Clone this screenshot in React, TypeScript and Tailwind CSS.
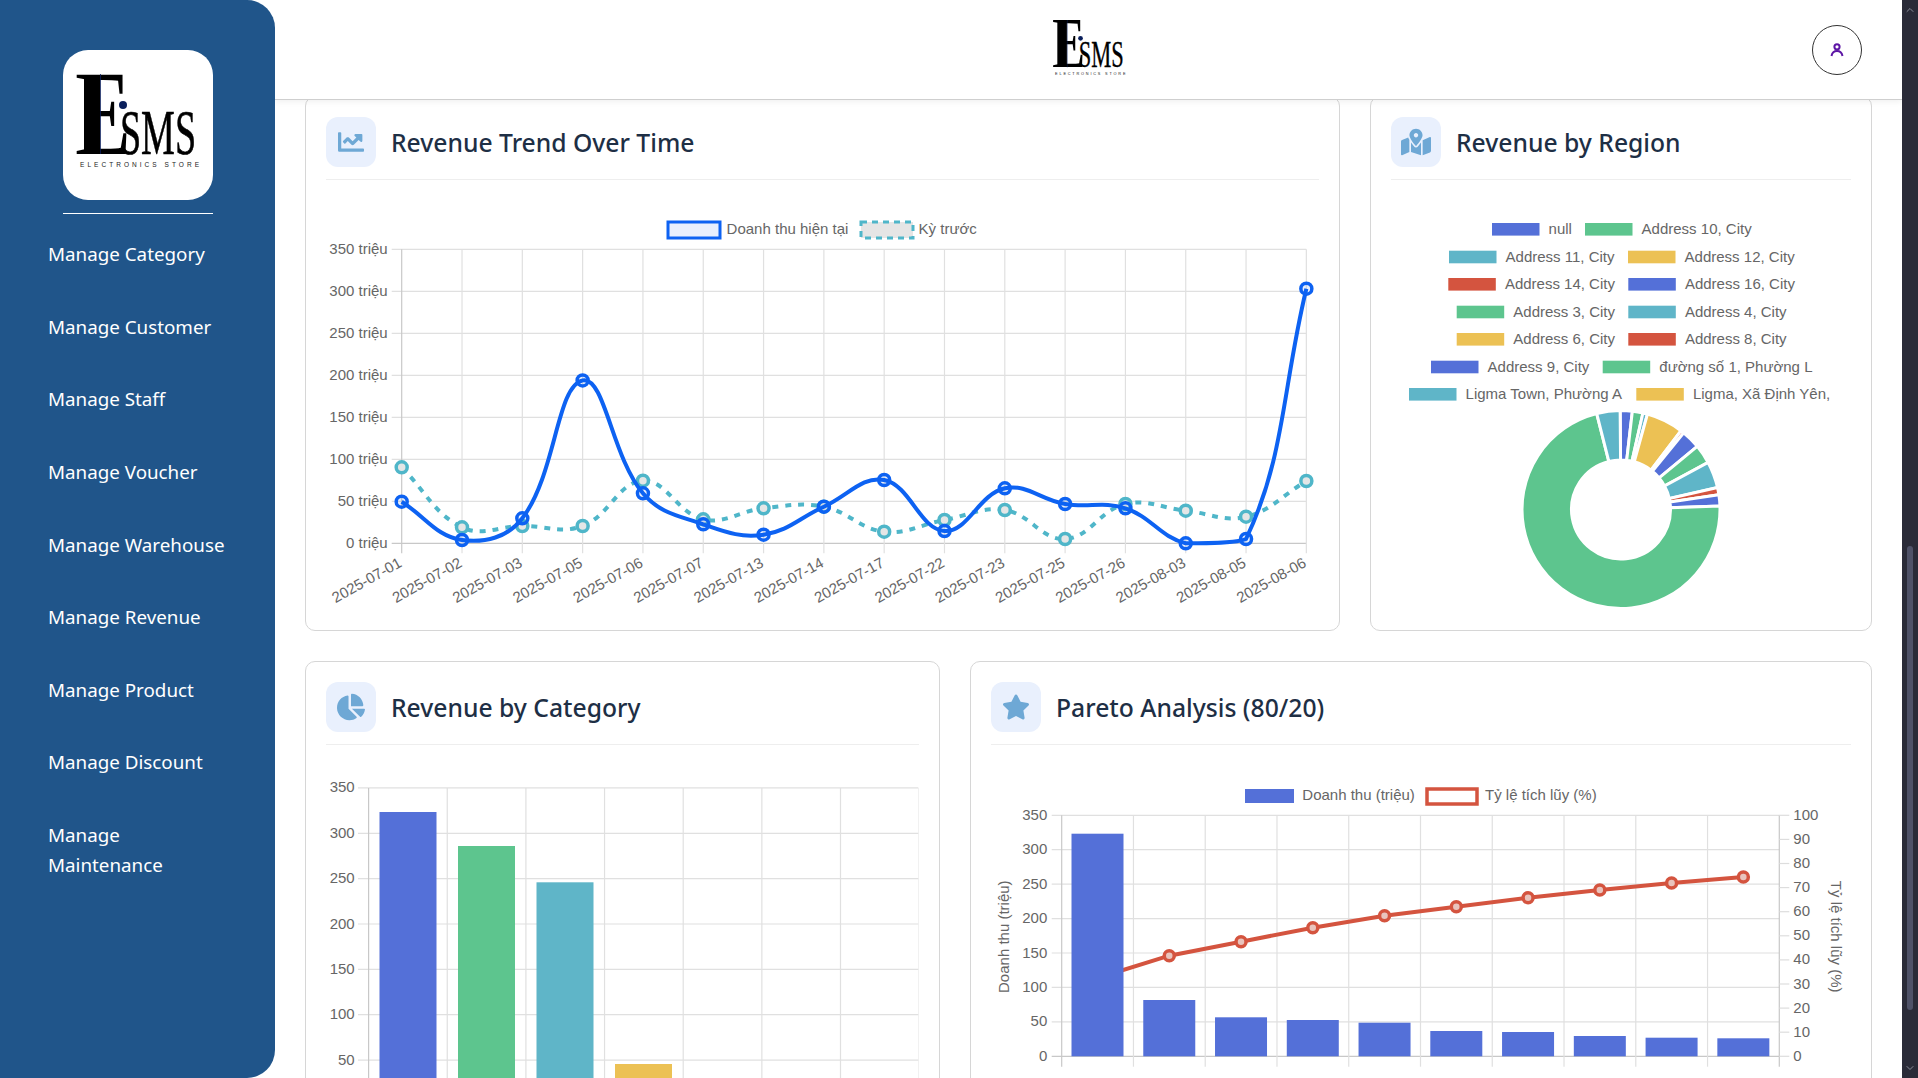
import { ChevronDown, ChevronUp } from 'lucide-react';
import { FaChartLine, FaChartPie, FaMapMarkedAlt, FaStar } from 'react-icons/fa';
import type { ReactNode } from 'react';

const BLUE = '#5470d8';
const GREEN = '#5dc58e';
const TEAL = '#5fb5c8';
const YELLOW = '#ecc154';
const RED = '#d4543f';

const navItems = [
  'Manage Category',
  'Manage Customer',
  'Manage Staff',
  'Manage Voucher',
  'Manage Warehouse',
  'Manage Revenue',
  'Manage Product',
  'Manage Discount',
  'Manage Maintenance',
];

const trendDates = [
  '2025-07-01', '2025-07-02', '2025-07-03', '2025-07-05', '2025-07-06', '2025-07-07', '2025-07-13', '2025-07-14',
  '2025-07-17', '2025-07-22', '2025-07-23', '2025-07-25', '2025-07-26', '2025-08-03', '2025-08-05', '2025-08-06',
];
const currentY = [501.7, 540, 518.3, 380.4, 493.3, 524.3, 534.7, 506.7, 480, 531, 488.3, 504, 508.3, 543.3, 539, 288.7];
const previousY = [467.3, 527.3, 526, 526, 480.7, 519.3, 508.3, 506.7, 531.7, 520, 510, 539, 504, 510.7, 516.7, 481];

// Same curve Chart.js draws with tension 0.4, control points capped to the chart area
function spline(points: [number, number][], bottom: number, t = 0.4) {
  let d = `M${points[0][0]} ${points[0][1]}`;
  const ctrl = points.map((p, i) => {
    const prev = points[Math.max(i - 1, 0)];
    const next = points[Math.min(i + 1, points.length - 1)];
    const d01 = Math.hypot(p[0] - prev[0], p[1] - prev[1]);
    const d12 = Math.hypot(next[0] - p[0], next[1] - p[1]);
    const total = d01 + d12 || 1;
    return {
      bx: p[0] - (t * d01 * (next[0] - prev[0])) / total,
      by: Math.min(p[1] - (t * d01 * (next[1] - prev[1])) / total, bottom),
      ax: p[0] + (t * d12 * (next[0] - prev[0])) / total,
      ay: Math.min(p[1] + (t * d12 * (next[1] - prev[1])) / total, bottom),
    };
  });
  for (let i = 1; i < points.length; i++) {
    d += ` C${ctrl[i - 1].ax} ${ctrl[i - 1].ay} ${ctrl[i].bx} ${ctrl[i].by} ${points[i][0]} ${points[i][1]}`;
  }
  return d;
}

function Logo({ className }: { className: string }) {
  return (
    <svg viewBox="11 24 125 93" className={`overflow-visible ${className}`}>
      <text x="11" y="104" textLength="57" lengthAdjust="spacingAndGlyphs" className="fill-black font-['Liberation_Serif',serif] text-[121px]">
        E
      </text>
      <rect x="21" y="26" width="16" height="76" fill="#000000" />
      <rect x="37" y="24" width="0.8" height="80" fill="#0a1f5c" />
      <circle cx="60" cy="55" r="4" fill="#0a1f5c" />
      <text x="57" y="104" textLength="76" lengthAdjust="spacingAndGlyphs" stroke="#000000" strokeWidth="0.6" className="fill-black font-['Liberation_Serif',serif] text-[64px]">
        SMS
      </text>
      <text x="17" y="116.500" textLength="119" className="fill-[#222] font-['Liberation_Sans',sans-serif] text-[6.500px]">
        ELECTRONICS STORE
      </text>
    </svg>
  );
}

function Card({ icon, title, children }: { icon: ReactNode; title: string; children: ReactNode }) {
  return (
    <div className="rounded-[10px] border border-[#d6d6d6] bg-white px-5 pb-5 pt-5">
      <div className="flex items-center gap-[15px] border-b border-[#eeeeee] pb-3">
        <div className="flex h-[50px] w-[50px] items-center justify-center rounded-xl bg-[#e9f0fd] text-[#6ea8d5]">{icon}</div>
        <h2 className="pt-[2px] font-['Noto_Sans',sans-serif] text-[24.700px] font-medium text-[#1e2f45]">{title}</h2>
      </div>
      {children}
    </div>
  );
}

function Label({ x, y, children, anchor = 'start' }: { x: number; y: number; children: ReactNode; anchor?: 'start' | 'end' }) {
  return (
    <text x={x} y={y - 1} textAnchor={anchor} dominantBaseline="central" className="fill-[#666666] text-[15px]">
      {children}
    </text>
  );
}

function TrendChart() {
  const xs = trendDates.map((_, i) => 401.7 + i * 60.31);
  const ys = [0, 1, 2, 3, 4, 5, 6, 7].map((i) => 543.3 - i * 42);
  const current = xs.map((x, i) => [x, currentY[i]] as [number, number]);
  const previous = xs.map((x, i) => [x, previousY[i]] as [number, number]);
  return (
    <svg viewBox="326 180 993 430" className="block h-[430px] w-[993px] font-['Liberation_Sans',sans-serif]">
      {ys.map((y, i) => (
        <g key={y}>
          <line x1="391.7" x2="1306.3" y1={y} y2={y} stroke={i === 0 ? '#c8c8c8' : '#e0e0e0'} strokeWidth="1.2" />
          <Label x={387.7} y={y} anchor="end">{`${i * 50} triệu`}</Label>
        </g>
      ))}
      {xs.map((x, i) => (
        <g key={trendDates[i]}>
          <line x1={x} x2={x} y1="249.3" y2="553.3" stroke={i === 0 ? '#c8c8c8' : '#e0e0e0'} strokeWidth="1.2" />
          <text
            textAnchor="end"
            transform={`translate(${x + 1} 566) rotate(-29)`}
            className="fill-[#666666] text-[15px]"
          >
            {trendDates[i]}
          </text>
        </g>
      ))}
      <rect x="668" y="222" width="52" height="16" fill="#e8effd" stroke="#0d62f2" strokeWidth="3" />
      <Label x={726.6} y={229}>Doanh thu hiện tại</Label>
      <rect x="861" y="222" width="52" height="16" fill="#e5e5e5" stroke="#4fb6c9" strokeWidth="3" strokeDasharray="6 5" />
      <Label x={918.6} y={229}>Kỳ trước</Label>

      <path d={spline(previous, 543.3)} fill="none" stroke="#4fb6c9" strokeWidth="4" strokeDasharray="6 7" />
      {previous.map(([x, y]) => (
        <circle key={x} cx={x} cy={y} r="5.5" fill="#e4e6e6" stroke="#4fb6c9" strokeWidth="3.5" />
      ))}
      <path d={spline(current, 543.3)} fill="none" stroke="#0d62f2" strokeWidth="4" />
      {current.map(([x, y]) => (
        <circle key={x} cx={x} cy={y} r="5.5" fill="#0d62f21a" stroke="#0d62f2" strokeWidth="3.5" />
      ))}
    </svg>
  );
}

const regionLegend: [number, number, string, string][] = [
  [229.3, 1492, 'null', BLUE],
  [229.3, 1585, 'Address 10, City', GREEN],
  [257, 1449, 'Address 11, City', TEAL],
  [257, 1628, 'Address 12, City', YELLOW],
  [284.3, 1448.3, 'Address 14, City', RED],
  [284.3, 1628.3, 'Address 16, City', BLUE],
  [312, 1456.7, 'Address 3, City', GREEN],
  [312, 1628.3, 'Address 4, City', TEAL],
  [339.3, 1456.7, 'Address 6, City', YELLOW],
  [339.3, 1628.3, 'Address 8, City', RED],
  [367, 1431, 'Address 9, City', BLUE],
  [367, 1602.7, 'đường số 1, Phường L', GREEN],
  [394.3, 1409, 'Ligma Town, Phường A', TEAL],
  [394.3, 1636.3, 'Ligma, Xã Định Yên,', YELLOW],
];

const slices: [number, number, string][] = [
  [-0.5, 6.6, BLUE],
  [6.6, 12.8, GREEN],
  [12.8, 15.5, TEAL],
  [15.5, 37.3, YELLOW],
  [37.3, 39.3, RED],
  [39.3, 50.4, BLUE],
  [50.4, 61.6, GREEN],
  [61.6, 77.2, TEAL],
  [77.2, 81.4, RED],
  [81.4, 88, BLUE],
  [88, 345.8, GREEN],
  [345.8, 359.5, TEAL],
];

function slicePath(from: number, to: number) {
  const cx = 1621;
  const cy = 509.5;
  const outer = 99;
  const inner = 49.5;
  const pt = (r: number, deg: number) => {
    const a = ((deg - 90) * Math.PI) / 180;
    return `${cx + r * Math.cos(a)} ${cy + r * Math.sin(a)}`;
  };
  const large = to - from > 180 ? 1 : 0;
  return `M${pt(outer, from)} A${outer} ${outer} 0 ${large} 1 ${pt(outer, to)} L${pt(inner, to)} A${inner} ${inner} 0 ${large} 0 ${pt(inner, from)} Z`;
}

function RegionChart() {
  return (
    <svg viewBox="1391 180 460 430" className="block h-[430px] w-[460px] font-['Liberation_Sans',sans-serif]">
      {regionLegend.map(([y, x, label, color]) => (
        <g key={label}>
          <rect x={x} y={y - 6.3} width="47.5" height="12.6" fill={color} />
          <Label x={x + 56.6} y={y}>{label}</Label>
        </g>
      ))}
      {slices.map(([from, to, color]) => (
        <path key={from} d={slicePath(from, to)} fill={color} stroke="#ffffff" strokeWidth="3" />
      ))}
    </svg>
  );
}

function CategoryChart() {
  const xs = [0, 1, 2, 3, 4, 5, 6, 7].map((i) => 368.6 + i * 78.65);
  const ys = [0, 1, 2, 3, 4, 5, 6, 7].map((i) => 1105.4 - i * 45.35);
  const bars: [number, number, string][] = [
    [379.5, 812, BLUE],
    [458, 846, GREEN],
    [536.5, 882.3, TEAL],
    [615, 1064, YELLOW],
  ];
  return (
    <svg viewBox="326 745 593 400" className="block h-[400px] w-[593px] font-['Liberation_Sans',sans-serif]">
      {ys.map((y, i) => (
        <g key={y}>
          <line x1="358" x2="918.3" y1={y} y2={y} stroke={i === 0 ? '#c8c8c8' : '#e0e0e0'} strokeWidth="1.2" />
          <Label x={354.7} y={y} anchor="end">{i * 50}</Label>
        </g>
      ))}
      {xs.map((x, i) => (
        <line key={x} x1={x} x2={x} y1="788" y2="1116" stroke={i === 0 ? '#c8c8c8' : '#e0e0e0'} strokeWidth="1.2" />
      ))}
      {bars.map(([x, top, color]) => (
        <rect key={x} x={x} y={top} width="57" height={1105.4 - top} fill={color} />
      ))}
    </svg>
  );
}

function ParetoChart() {
  const xs = Array.from({ length: 11 }, (_, i) => 1061.7 + i * 71.76);
  const ys = [0, 1, 2, 3, 4, 5, 6, 7].map((i) => 1056.3 - i * 34.43);
  const tops = [833.7, 1000, 1017.3, 1020, 1022.7, 1031, 1032, 1036, 1037.7, 1038.3];
  const centers = tops.map((_, i) => 1097.5 + i * 71.76);
  const lineY = [978, 955.7, 941.7, 927.7, 915.7, 906.7, 897.7, 890, 883, 877];
  const line = centers.map((x, i) => `${x},${lineY[i]}`).join(' ');
  return (
    <svg viewBox="991 745 860 400" className="block h-[400px] w-[860px] font-['Liberation_Sans',sans-serif]">
      {ys.map((y, i) => (
        <g key={y}>
          <line x1="1051.7" x2="1779.3" y1={y} y2={y} stroke={i === 0 ? '#c8c8c8' : '#e0e0e0'} strokeWidth="1.2" />
          <Label x={1047.3} y={y} anchor="end">{i * 50}</Label>
        </g>
      ))}
      {xs.map((x, i) => (
        <line key={x} x1={x} x2={x} y1="815.3" y2="1066.7" stroke={i === 0 || i === 10 ? '#c8c8c8' : '#e0e0e0'} strokeWidth="1.2" />
      ))}
      {Array.from({ length: 11 }, (_, i) => {
        const y = 1056.3 - i * 24.1;
        return (
          <g key={i}>
            <line x1="1779.3" x2="1789.3" y1={y} y2={y} stroke="#dddddd" strokeWidth="1.2" />
            <Label x={1793.3} y={y}>{i * 10}</Label>
          </g>
        );
      })}
      <rect x="1245" y="789" width="49" height="14" fill={BLUE} />
      <Label x={1302.3} y={795}>Doanh thu (triệu)</Label>
      <rect x="1427" y="789" width="50" height="15" fill="#ffffff" stroke={RED} strokeWidth="3.5" />
      <Label x={1485} y={795}>Tỷ lệ tích lũy (%)</Label>
      <text transform="translate(1003 936.7) rotate(-90)" textAnchor="middle" dominantBaseline="central" className="fill-[#666666] text-[15px]">
        Doanh thu (triệu)
      </text>
      <text transform="translate(1836.7 936.7) rotate(90)" textAnchor="middle" dominantBaseline="central" className="fill-[#666666] text-[15px]">
        Tỷ lệ tích lũy (%)
      </text>

      <polyline points={line} fill="none" stroke={RED} strokeWidth="4" />
      {centers.map((x, i) => (
        <circle key={x} cx={x} cy={lineY[i]} r="5" fill="#e9c4bd" stroke={RED} strokeWidth="3.5" />
      ))}
      {centers.map((x, i) => (
        <rect key={x} x={x - 26} y={tops[i]} width="52" height={1056.3 - tops[i]} fill={BLUE} />
      ))}
    </svg>
  );
}

export default function App() {
  return (
    <div className="flex h-screen overflow-hidden bg-white font-['Noto_Sans',sans-serif]">
      <aside className="flex h-screen w-[275px] shrink-0 flex-col rounded-r-[28px] bg-[#20558a] pt-[50px]">
        <div className="mx-[63px] flex h-[150px] w-[150px] shrink-0 rounded-[25px] bg-white pl-[11px] pt-[24px]">
          <Logo className="h-[93px] w-[125px]" />
        </div>
        <div className="mx-[63px] mt-[13px] h-px w-[150px] shrink-0 bg-white" />
        <nav className="mt-[4px] flex flex-col">
          {navItems.map((item) => (
            <a key={item} className="w-[238px] py-[21.3px] pl-12 text-[18.800px] leading-[30px] text-white">
              {item}
            </a>
          ))}
        </nav>
      </aside>

      <main className="flex h-screen min-w-0 flex-1 flex-col overflow-hidden">
        <header className="relative z-10 grid h-[100px] shrink-0 grid-cols-[1fr_auto_1fr] items-center border-b border-[#cfcfcf] bg-white px-10 shadow-[0_2px_6px_rgba(0,0,0,0.06)]">
          <div />
          <Logo className="mb-1 h-[55px] w-[75px]" />
          <div className="flex justify-end">
            <button className="flex h-[50px] w-[50px] items-center justify-center rounded-full border border-[#333333] bg-white">
              <svg width="18" height="14" viewBox="0 0 18 14" fill="none" stroke="#5d16a5" strokeWidth="2">
                <circle cx="9" cy="3.8" r="2.6" />
                <path d="M3.5 13c.6-3.2 2.6-5 5.5-5s4.900 1.800 5.500 5" />
              </svg>
            </button>
          </div>
        </header>

        <div className="-mt-1 flex flex-col gap-[30px] px-[30px]">
          <div className="grid grid-cols-[1035px_502px] gap-[30px]">
            <Card icon={<FaChartLine size={26} />} title="Revenue Trend Over Time">
              <TrendChart />
            </Card>
            <Card icon={<FaMapMarkedAlt size={30} />} title="Revenue by Region">
              <RegionChart />
            </Card>
          </div>
          <div className="grid grid-cols-[635px_902px] gap-[30px]">
            <Card icon={<FaChartPie size={28} />} title="Revenue by Category">
              <CategoryChart />
            </Card>
            <Card icon={<FaStar size={28} />} title="Pareto Analysis (80/20)">
              <ParetoChart />
            </Card>
          </div>
        </div>
      </main>

      <div className="flex h-screen w-4 shrink-0 flex-col items-center bg-[#2a2b38] text-[#8a8d99]">
        <ChevronUp size={12} className="mt-1" />
        <div className="mt-[530px] h-[464px] w-[6px] rounded-full bg-[#4f5268]" />
        <ChevronDown size={12} className="mb-1 mt-auto" />
      </div>
    </div>
  );
}
